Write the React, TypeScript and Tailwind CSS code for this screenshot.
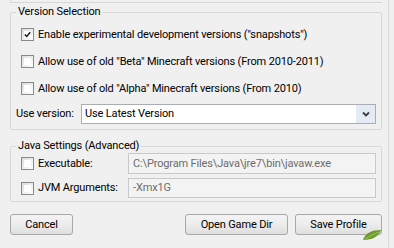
import React from 'react';

const font = "font-['Roboto','Open_Sans',sans-serif]";

const CheckBox: React.FC<{ checked?: boolean }> = ({ checked }) => (
  <div className="w-[13px] h-[13px] shrink-0 border border-[#8a8a8a] bg-gradient-to-br from-[#dcdcdc] to-white p-[2px]">
    <div className="w-full h-full bg-white flex items-center justify-center">
      {checked && (
        <svg width="9" height="9" viewBox="0 0 9 9">
          <path d="M1 4.5 L3.5 7 L8 1.5" fill="none" stroke="#1c1c1c" strokeWidth="2" />
        </svg>
      )}
    </div>
  </div>
);

const CheckRow: React.FC<{ checked?: boolean; label: string }> = ({ checked, label }) => (
  <div className="h-[27px] flex items-center gap-[4px] pl-[5px] whitespace-nowrap">
    <CheckBox checked={checked} />
    <span>{label}</span>
  </div>
);

const Button: React.FC<{ label: string; w: string }> = ({ label, w }) => (
  <div
    className={`${w} h-[21px] rounded-[3px] border border-[#a8a8a8] bg-gradient-to-b from-[#f4f4f4] via-[#ececec] to-[#dedede] flex items-center justify-center whitespace-nowrap`}
  >
    {label}
  </div>
);

const JavaRow: React.FC<{ label: string; value: string; h: string }> = ({ label, value, h }) => (
  <div className={`${h} flex items-center whitespace-nowrap`}>
    <div className="w-[112px] flex items-center gap-[4px] pl-[5px]">
      <CheckBox />
      <span>{label}</span>
    </div>
    <div className="flex-1 h-full border border-[#c9c9c9] bg-[#f3f3f3] flex items-center px-[4px] text-[#6d6d6d]">
      {value}
    </div>
  </div>
);

export default function App() {
  return (
    <div className={`w-[394px] h-[248px] bg-[#f0f0f0] text-black text-[11px] leading-[14px] tracking-[-0.15px] ${font} overflow-hidden relative`}>
      <div className="w-[389px] h-full border-r border-[#dadada] pl-[10px] pr-[6px]">
        {/* bottom of the group above */}
        <div className="h-[3px] border-l border-b border-[#d8d8d8]" />

        <fieldset className="mt-[2px] border border-[#d8d8d8] rounded-[2px] px-[5px] pb-[3px]">
          <legend className="px-[2px] h-[14px]">Version Selection</legend>
          <div className="mt-[2px]">
            <CheckRow checked label={'Enable experimental development versions ("snapshots")'} />
            <CheckRow label={'Allow use of old "Beta" Minecraft versions (From 2010-2011)'} />
            <CheckRow label={'Allow use of old "Alpha" Minecraft versions (From 2010)'} />
            <div className="h-[24px] flex items-center whitespace-nowrap">
              <span className="w-[65px]">Use version:</span>
              <div className="flex-1 h-[20px] flex border border-[#abadb3] bg-white">
                <div className="flex-1 flex items-center pl-[3px]">Use Latest Version</div>
                <div className="w-[19px] bg-[#e4ebf4] flex items-center justify-center">
                  <svg width="8" height="6" viewBox="0 0 8 6">
                    <path d="M1 1.5 L4 4.5 L7 1.5" fill="none" stroke="#3c3c3c" strokeWidth="1.8" />
                  </svg>
                </div>
              </div>
            </div>
          </div>
        </fieldset>

        <fieldset className="mt-[9px] border border-[#d8d8d8] rounded-[2px] px-[5px] pb-[3px]">
          <legend className="px-[2px] h-[14px]">Java Settings (Advanced)</legend>
          <div className="flex flex-col gap-[4px]">
            <JavaRow label="Executable:" value="C:\Program Files\Java\jre7\bin\javaw.exe" h="h-[21px]" />
            <JavaRow label="JVM Arguments:" value="-Xmx1G" h="h-[20px]" />
          </div>
        </fieldset>

        <div className="mt-[12px] flex items-center">
          <Button label="Cancel" w="w-[63px]" />
          <div className="flex-1" />
          <Button label="Open Game Dir" w="w-[103px]" />
          <div className="w-[7px]" />
          <Button label="Save Profile" w="w-[87px]" />
        </div>
      </div>

      {/* watermark leaf */}
      <svg className="absolute left-[362px] top-[229px]" width="20" height="12" viewBox="0 0 20 12">
        <path d="M1 11 C3 4 10 1 19 1 C17 7 11 11 1 11 Z" fill="#6f9a2e" />
        <path d="M3 10 C8 7 12 5 17 3" fill="none" stroke="#9cc45a" strokeWidth="1" />
      </svg>
    </div>
  );
}
